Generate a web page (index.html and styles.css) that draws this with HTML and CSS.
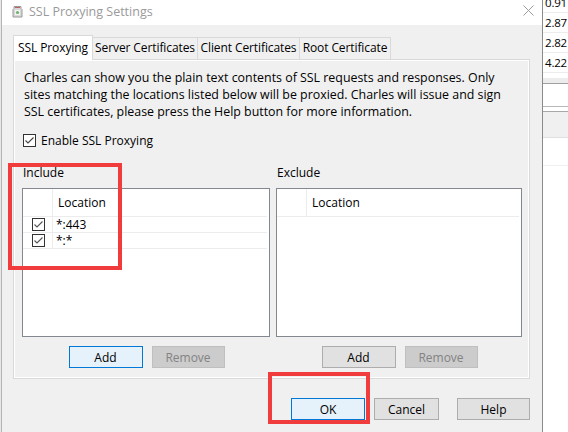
FILE: index.html
```html
<!DOCTYPE html>
<html>
<head>
<meta charset="utf-8">
<link rel="stylesheet" href="styles.css">
</head>
<body>
<div class="screen">
  <div class="dialog">
    <div class="titlebar">
      <svg class="app-icon" width="11" height="13" viewBox="0 0 11 13">
        <path d="M2 1.5h7v2l1 1v7.5h-9v-7.5l1-1z" fill="#d8d8d8" stroke="#9a9a9a" stroke-width="1"/>
        <rect x="3" y="5" width="5" height="5" fill="#f4f4f4"/>
        <circle cx="5.5" cy="7.5" r="1.6" fill="#6fb36f"/>
        <rect x="3" y="2" width="5" height="1" fill="#c06060"/>
      </svg>
      <span class="title">SSL Proxying Settings</span>
      <svg class="close" width="11" height="11" viewBox="0 0 11 11">
        <path d="M0.5 0.5L10.5 10.5M10.5 0.5L0.5 10.5" stroke="#9b9b9b" stroke-width="1"/>
      </svg>
    </div>
    <div class="body">
      <div class="tabs">
        <div class="tab active">SSL Proxying</div>
        <div class="tab t-server">Server Certificates</div>
        <div class="tab t-client">Client Certificates</div>
        <div class="tab t-root">Root Certificate</div>
      </div>
      <div class="panel">
        <p class="desc">Charles can show you the plain text contents of SSL requests and responses. Only<br>sites matching the locations listed below will be proxied. Charles will issue and sign<br>SSL certificates, please press the Help button for more information.</p>
        <div class="check-row">
          <span class="cb"><svg width="11" height="11" viewBox="0 0 11 11"><path d="M1.5 5.5L4 8L9.5 2.5" fill="none" stroke="#444" stroke-width="1.1"/></svg></span>
          <span>Enable SSL Proxying</span>
        </div>
        <div class="lists">
          <div class="list">
            <div class="list-label">Include</div>
            <div class="table">
              <div class="thead"><div class="c1"></div><div class="c2">Location</div></div>
              <div class="row">
                <div class="c1"><span class="cb"><svg width="11" height="11" viewBox="0 0 11 11"><path d="M1.5 5.5L4 8L9.5 2.5" fill="none" stroke="#555" stroke-width="1.1"/></svg></span></div>
                <div class="c2">*:443</div>
              </div>
              <div class="row">
                <div class="c1"><span class="cb"><svg width="11" height="11" viewBox="0 0 11 11"><path d="M1.5 5.5L4 8L9.5 2.5" fill="none" stroke="#555" stroke-width="1.1"/></svg></span></div>
                <div class="c2">*:*</div>
              </div>
            </div>
            <div class="btns">
              <button class="btn focus add">Add</button>
              <button class="btn disabled remove">Remove</button>
            </div>
          </div>
          <div class="list">
            <div class="list-label">Exclude</div>
            <div class="table">
              <div class="thead"><div class="c1"></div><div class="c2">Location</div></div>
            </div>
            <div class="btns">
              <button class="btn add">Add</button>
              <button class="btn disabled remove">Remove</button>
            </div>
          </div>
        </div>
      </div>
      <div class="footer">
        <button class="btn focus ok">OK</button>
        <button class="btn cancel">Cancel</button>
        <button class="btn help">Help</button>
      </div>
    </div>
  </div>
  <div class="bgapp">
    <div class="num">0.91</div>
    <div class="num">2.87</div>
    <div class="num">2.82</div>
    <div class="num">4.22</div>
    <div class="gap1"></div>
    <div class="band1"></div>
    <div class="gap2"></div>
    <div class="band2"></div>
    <div class="gap3"></div>
  </div>
  <div class="mark mark-include"></div>
  <div class="mark mark-ok"></div>
</div>
</body>
</html>
```

FILE: styles.css
```css
* { box-sizing: border-box; }
html, body { margin: 0; padding: 0; }
body {
  width: 568px;
  height: 432px;
  overflow: hidden;
  background: #ffffff;
  font-family: "Open Sans", "Noto Sans", sans-serif;
  font-size: 12px;
  color: #000;
}
.screen {
  position: relative;
  display: flex;
  width: 568px;
  height: 432px;
  overflow: hidden;
  background: #e8e8e8;
}
.dialog {
  margin-left: 1px;
  width: 542px;
  height: 432px;
  border-left: 1px solid #b4b4b4;
  border-right: 1px solid #8a8a8a;
  display: flex;
  flex-direction: column;
  flex-shrink: 0;
}
.titlebar {
  height: 25px;
  background: #ffffff;
  display: flex;
  align-items: center;
  padding-left: 10px;
  padding-right: 8px;
}
.app-icon { margin-top: -2px; }
.title {
  margin-left: 6px;
  color: #9a9a9a;
  font-size: 12.5px;
  margin-top: -2px;
}
.close { margin-left: auto; margin-top: -4px; }
.body {
  flex: 1;
  background: #f0f0f0;
  padding: 10px 12px 0 11px;
}
.tabs {
  display: flex;
  align-items: flex-end;
  height: 24px;
}
.tab {
  height: 22px;
  line-height: 20px;
  padding: 0;
  text-align: center;
  border: 1px solid #d9d9d9;
  border-bottom: none;
  border-left: none;
  background: #f0f0f0;
  white-space: nowrap;
  letter-spacing: -0.1px;
}
.tab.active {
  height: 25px;
  margin-bottom: -1px;
  position: relative;
  z-index: 1;
  background: #ffffff;
  border-left: 1px solid #d9d9d9;
  line-height: 23px;
  width: 80px;
}
.t-server { width: 105px; }
.t-client { width: 102px; }
.t-root { width: 91px; }
.panel {
  border: 1px solid #d9d9d9;
  box-shadow: inset 1px 1px 0 #ffffff, inset -1px -1px 0 #ffffff;
  background: #f0f0f0;
  padding: 9px 6px 10px 8px;
}
.desc {
  margin: 0 0 0 2px;
  line-height: 17px;
  font-size: 12.4px;
  white-space: nowrap;
}
.check-row {
  margin-top: 12px;
  margin-left: 1px;
  height: 17px;
  display: flex;
  align-items: center;
  gap: 5px;
}
.cb {
  width: 13px;
  height: 13px;
  border: 1px solid #333333;
  background: #ffffff;
  display: inline-flex;
  align-items: center;
  justify-content: center;
  flex-shrink: 0;
}
.lists {
  margin-top: 15px;
  display: grid;
  grid-template-columns: 248px 246px;
  column-gap: 6px;
}
.list-label {
  line-height: 17px;
  margin-left: 1px;
}
.table {
  margin-top: 7px;
  height: 149px;
  border: 1px solid #828790;
  background: #ffffff;
  padding-right: 2px;
}
.thead, .row {
  display: flex;
  border-bottom: 1px solid #ececec;
}
.thead { height: 28px; }
.row { height: 16px; }
.c1 {
  width: 30px;
  border-right: 1px solid #ececec;
  display: flex;
  align-items: center;
  justify-content: center;
  padding-left: 1px;
}
.c2 {
  flex: 1;
  display: flex;
  align-items: center;
  padding-left: 3px;
  line-height: 15px;
}
.thead .c2 { padding-left: 5px; }
.btns {
  margin-top: 9px;
  display: flex;
  justify-content: center;
  gap: 9px;
  padding-left: 1px;
}
.btn {
  height: 22px;
  font-family: inherit;
  font-size: 12px;
  color: #000;
  background: #e1e1e1;
  border: 1px solid #adadad;
  padding: 0;
  margin: 0;
}
.btn.focus {
  background: #e5f1fb;
  border-color: #0078d7;
}
.btn.disabled {
  background: #cccccc;
  border-color: #bfbfbf;
  color: #838383;
}
.add { width: 74px; }
.remove { width: 73px; }
.footer {
  margin-top: 19px;
  display: flex;
  justify-content: flex-end;
}
.ok { width: 74px; }
.cancel { width: 65px; margin-left: 9px; }
.help { width: 73px; margin-left: 18px; }
.bgapp {
  width: 25px;
  flex-shrink: 0;
  background: #ffffff;
  margin-top: -7px;
  overflow: hidden;
}
.num {
  height: 20px;
  border-bottom: 1px solid #ececec;
  display: flex;
  justify-content: flex-end;
  align-items: center;
  padding-right: 1px;
  white-space: nowrap;
  font-size: 11.5px;
  letter-spacing: -0.2px;
}
.gap1 { height: 5px; }
.band1 {
  height: 6px;
  background: #ececec;
  border-bottom: 1px solid #a0a0a0;
}
.gap2 {
  height: 23px;
  border-bottom: 1px solid #b8b8b8;
  margin-bottom: 4px;
}
.band2 {
  height: 27px;
  background: #f0f0f0;
  border-top: 1px solid #a8a8a8;
  border-bottom: 1px solid #e0e0e0;
}
.gap3 {
  height: 28px;
  border-bottom: 1px solid #f0f0f0;
}
.mark {
  position: absolute;
  border: 4px solid #f03c3c;
}
.mark-include {
  left: 8px;
  top: 163px;
  width: 114px;
  height: 107px;
}
.mark-ok {
  left: 268px;
  top: 372px;
  width: 102px;
  height: 52px;
}
```
